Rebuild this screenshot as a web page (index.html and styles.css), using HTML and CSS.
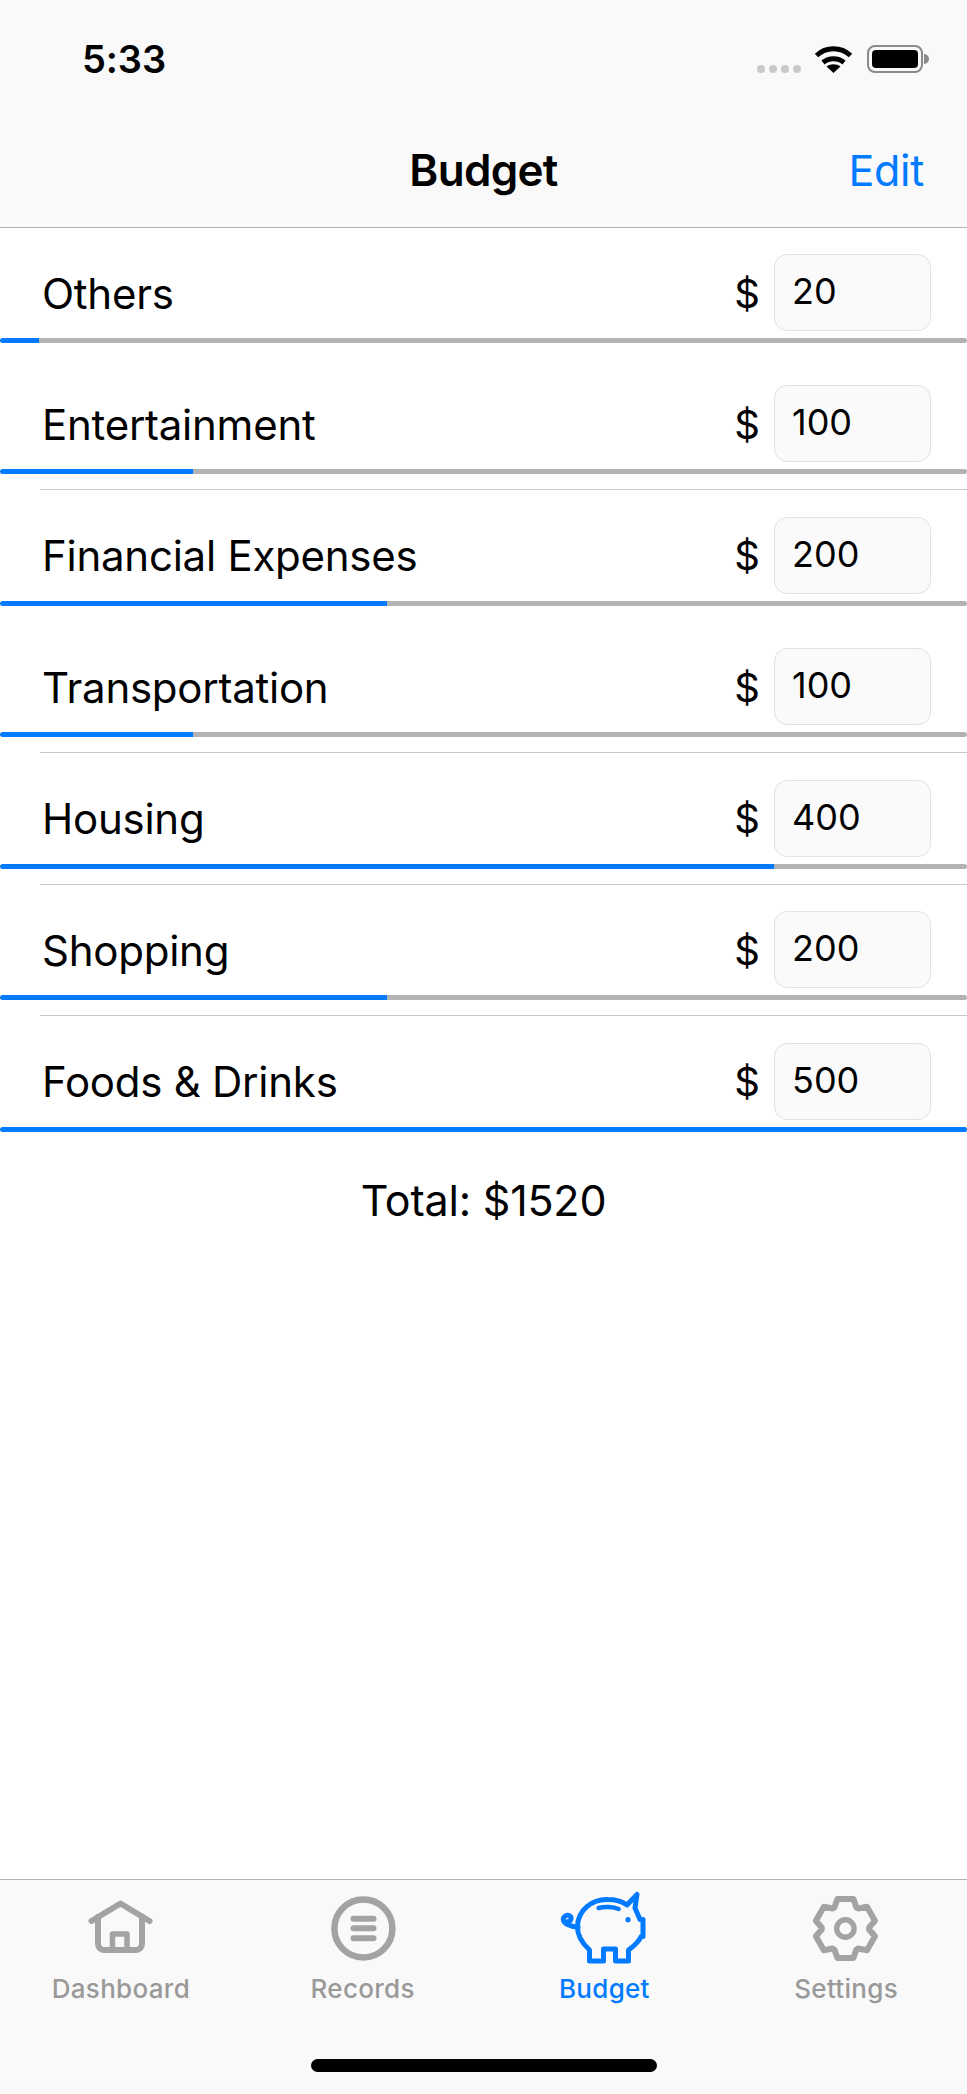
FILE: index.html
```html
<!DOCTYPE html>
<html lang="en">
<head>
<meta charset="utf-8">
<title>Budget</title>
<link rel="stylesheet" href="styles.css">
</head>
<body>
<div class="app">
  <header class="top">
    <div class="status">
      <span class="time">5:33</span>
      <div class="status-icons">
        <div class="dots"><i></i><i></i><i></i><i></i></div>
        <svg class="wifi" viewBox="0 0 39 29" width="39" height="29">
          <path d="M2.5 11.5C12 2.5 27 2.5 36.5 11.5" fill="none" stroke="#000" stroke-width="5"/>
          <path d="M9 18.5C15 13.5 24 13.5 30 18.5" fill="none" stroke="#000" stroke-width="5"/>
          <path d="M19.5 29L12.5 22.5C16.5 19.5 22.5 19.5 26.5 22.5Z" fill="#000"/>
        </svg>
        <div class="battery"><div class="battery-fill"></div></div>
        <div class="battery-nub"></div>
      </div>
    </div>
    <div class="nav">
      <h1 class="nav-title">Budget</h1>
      <span class="nav-edit">Edit</span>
    </div>
  </header>

  <main class="content">
    <div class="row">
      <div class="row-main"><span class="cat">Others</span><span class="cur">$</span><div class="amount">20</div></div>
      <div class="bar"><div class="fill" style="width:4%"></div></div>
    </div>
    <div class="row">
      <div class="row-main"><span class="cat">Entertainment</span><span class="cur">$</span><div class="amount">100</div></div>
      <div class="bar"><div class="fill" style="width:20%"></div></div>
      <div class="sep"></div>
    </div>
    <div class="row">
      <div class="row-main"><span class="cat">Financial Expenses</span><span class="cur">$</span><div class="amount">200</div></div>
      <div class="bar"><div class="fill" style="width:40%"></div></div>
    </div>
    <div class="row">
      <div class="row-main"><span class="cat">Transportation</span><span class="cur">$</span><div class="amount">100</div></div>
      <div class="bar"><div class="fill" style="width:20%"></div></div>
      <div class="sep"></div>
    </div>
    <div class="row">
      <div class="row-main"><span class="cat">Housing</span><span class="cur">$</span><div class="amount">400</div></div>
      <div class="bar"><div class="fill" style="width:80%"></div></div>
      <div class="sep"></div>
    </div>
    <div class="row">
      <div class="row-main"><span class="cat">Shopping</span><span class="cur">$</span><div class="amount">200</div></div>
      <div class="bar"><div class="fill" style="width:40%"></div></div>
      <div class="sep"></div>
    </div>
    <div class="row">
      <div class="row-main"><span class="cat">Foods &amp; Drinks</span><span class="cur">$</span><div class="amount">500</div></div>
      <div class="bar"><div class="fill" style="width:100%"></div></div>
    </div>
    <div class="total">Total: $1520</div>
  </main>

  <footer class="tabbar">
    <nav class="tabs">
      <div class="tab">
        <svg class="tab-icon" viewBox="0 0 96 76" width="96" height="76">
          <g fill="none" stroke="#a3a3a3" stroke-linecap="round" stroke-linejoin="round">
            <path stroke-width="6" d="M18.5 31L47.5 13.5L76.5 31"/>
            <path stroke-width="6" d="M25 27V53C25 57 27 60 31 60H63C67 60 69 57 69 53V27"/>
            <path stroke-width="5.5" d="M39.5 59V44H54V59"/>
          </g>
        </svg>
        <span class="tab-label">Dashboard</span>
      </div>
      <div class="tab">
        <svg class="tab-icon" viewBox="0 0 96 76" width="96" height="76">
          <g fill="none" stroke="#a3a3a3">
            <circle cx="48.4" cy="38.5" r="29" stroke-width="6.5"/>
            <path stroke-width="6" stroke-linecap="round" d="M38.5 28.7H58.5M38.5 38.3H58.5M38.5 48.3H58.5"/>
          </g>
        </svg>
        <span class="tab-label">Records</span>
      </div>
      <div class="tab tab-active">
        <svg class="tab-icon" viewBox="0 0 96 76" width="96" height="76">
          <g fill="none" stroke="#007aff" stroke-linejoin="round" stroke-linecap="round">
            <path stroke-width="5" d="M72.5 60V71H59.5V59H47.5V71H33.5V60C26 53 21 45 21.5 36C22 20 36 9 52 9.5C60 9.5 66 11.5 71 15L81 4.5L79 18L84 29.5H87V46.5H85C83 52 78 56 72.5 60Z"/>
            <path stroke-width="4.5" d="M42.6 18C48 16.5 57 16.5 62.6 19"/>
            <path stroke-width="5" d="M22 37C15 37 9 34 7.5 30.5C6.5 26.5 11 24 14 26C16 28 15 31.5 12 31.5"/>
          </g>
          <circle cx="72" cy="29.7" r="2.6" fill="#007aff"/>
        </svg>
        <span class="tab-label">Budget</span>
      </div>
      <div class="tab">
        <svg class="tab-icon" viewBox="0 0 96 76" width="96" height="76">
          <g transform="translate(47.4 38.5)" fill="none" stroke="#a3a3a3" stroke-linejoin="round">
            <path stroke-width="6" d="M-11 -21L-8 -29.5H8L11 -21L12.69 -20.03L21.55 -21.68L29.55 -7.82L23.69 -.97V.97L29.55 7.82L21.55 21.68L12.69 20.03L11 21L8 29.5H-8L-11 21L-12.69 20.03L-21.55 21.68L-29.55 7.82L-23.69 .97V-.97L-29.55 -7.82L-21.55 -21.68L-12.69 -20.03Z"/>
            <circle r="8.7" stroke-width="5.4"/>
          </g>
        </svg>
        <span class="tab-label">Settings</span>
      </div>
    </nav>
    <div class="home-wrap"><div class="home"></div></div>
  </footer>
</div>
</body>
</html>
```

FILE: styles.css
```css
* { box-sizing: border-box; }
html, body { margin: 0; padding: 0; background: #fff; }
body { font-family: Inter, "Liberation Sans", sans-serif; color: #000; }
.app { display: flex; flex-direction: column; height: 2094px; width: 967px; overflow: hidden; }

.top { background: #f9f9f9; border-bottom: 1px solid #b2b2b2; height: 228px; flex: none; }
.status { height: 113px; display: flex; justify-content: space-between; padding: 44px 38px 0 82px; }
.time { font-size: 38px; font-weight: 600; line-height: 30px; letter-spacing: -0.1px; }
.status-icons { display: flex; align-items: flex-start; }
.dots { display: flex; gap: 4px; margin-top: 21px; margin-right: 13px; }
.dots i { display: block; width: 8px; height: 8px; border-radius: 50%; background: #c8c8c8; }
.wifi { display: block; margin-right: 14px; }
.battery { width: 56px; height: 28px; margin-top: 1px; padding: 3px; border: 2px solid #8a8a8a; border-radius: 8px; }
.battery-fill { width: 100%; height: 100%; background: #000; border-radius: 4px; }
.battery-nub { width: 5px; height: 10px; margin-top: 10px; margin-left: 1px; background: #8a8a8a; border-radius: 0 5px 5px 0; }

.nav { height: 114px; position: relative; display: flex; align-items: center; justify-content: center; }
.nav-title { margin: 0; font-size: 44px; font-weight: 600; line-height: 54px; letter-spacing: -0.7px; }
.nav-edit { position: absolute; right: 43px; top: 30px; font-size: 43px; line-height: 54px; color: #007aff; letter-spacing: -0.3px; }

.content { flex: 1; min-height: 0; }
.row { height: 131.5px; padding-top: 26px; }
.row:nth-child(2) { margin-top: -0.3px; }
.row-main { height: 77px; display: flex; align-items: center; padding: 0 36px 0 42px; }
.cat { flex: 1; font-size: 42px; line-height: 54px; padding-top: 2px; letter-spacing: -0.25px; }
.cur { font-size: 40px; line-height: 54px; margin-right: 14px; padding-top: 2px; }
.amount { width: 157px; height: 77px; padding-left: 17px; background: #fafafa; border: 1px solid #e2e2e2; border-radius: 13px; font-size: 36px; line-height: 72px; }
.bar { height: 5px; margin-top: 7px; background: #b3b3b3; border-radius: 3px; overflow: hidden; }
.fill { height: 100%; background: #007aff; border-radius: 3px 0 0 3px; }
.sep { height: 1px; margin: 15px 0 0 40px; background: #c8c7cc; }
.total { height: 104px; display: flex; align-items: center; justify-content: center; font-size: 43px; letter-spacing: -0.2px; }

.tabbar { height: 215px; flex: none; background: #f9f9f9; border-top: 1px solid #b2b2b2; display: flex; flex-direction: column; }
.tabs { display: grid; grid-template-columns: repeat(4, 1fr); padding-top: 10px; }
.tab { display: flex; flex-direction: column; align-items: center; color: #999; }
.tab-active { color: #007aff; }
.tab-icon { display: block; }
.tab-label { font-size: 26px; font-weight: 500; line-height: 30px; margin-top: 8px; letter-spacing: 0.3px; }
.home-wrap { display: flex; justify-content: center; margin-top: 55px; }
.home { width: 346px; height: 13px; border-radius: 7px; background: #000; }
```
